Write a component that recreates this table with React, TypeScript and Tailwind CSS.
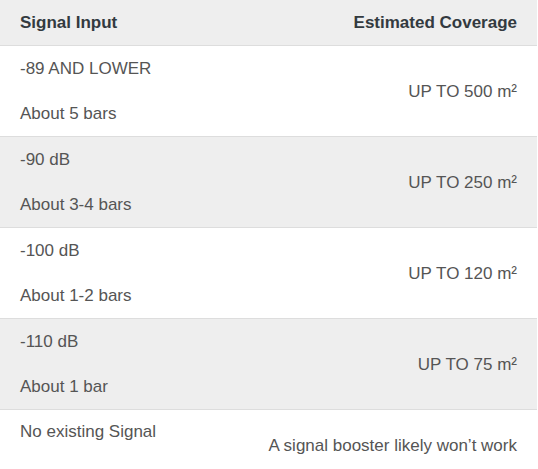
const rows = [
  { signal: "-89 AND LOWER", bars: "About 5 bars", coverage: "UP TO 500 m²" },
  { signal: "-90 dB", bars: "About 3-4 bars", coverage: "UP TO 250 m²" },
  { signal: "-100 dB", bars: "About 1-2 bars", coverage: "UP TO 120 m²" },
  { signal: "-110 dB", bars: "About 1 bar", coverage: "UP TO 75 m²" },
];

export default function App() {
  return (
    <div className="w-[537px] bg-white text-[17px] leading-6 font-['Liberation_Sans',Arial,sans-serif]">
      {/* Header */}
      <div className="flex items-center justify-between h-[46px] px-5 bg-[#eeeeee] border-b border-[#dddddd] font-bold text-[#333a40]">
        <span>Signal Input</span>
        <span>Estimated Coverage</span>
      </div>

      {rows.map((row, i) => (
        <div
          key={row.signal}
          className={
            "flex items-center justify-between h-[91px] px-5 border-b border-[#dddddd] text-[#555555] " +
            (i % 2 === 1 ? "bg-[#eeeeee]" : "bg-white")
          }
        >
          <div className="flex flex-col gap-[21px]">
            <span>{row.signal}</span>
            <span>{row.bars}</span>
          </div>
          <span className="pt-[1px]">{row.coverage}</span>
        </div>
      ))}

      {/* Last row */}
      <div className="flex justify-between h-[70px] px-5 text-[#555555]">
        <span className="pt-[10px]">No existing Signal</span>
        <span className="self-center pt-[1px]">A signal booster likely won’t work</span>
      </div>
    </div>
  );
}
